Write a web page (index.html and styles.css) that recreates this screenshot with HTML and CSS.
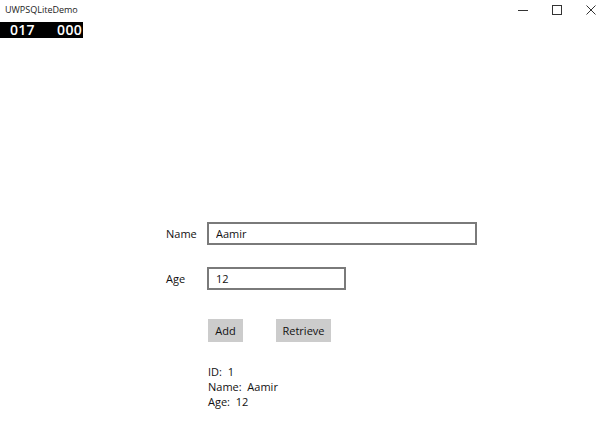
FILE: index.html
```html
<!DOCTYPE html>
<html lang="en">
<head>
    <meta charset="UTF-8">
    <meta name="viewport" content="width=device-width, initial-scale=1.0">
    <title>UWPSQLiteDemo</title>
    <link rel="stylesheet" href="styles.css">
</head>
<body>
    <div class="titlebar">
        <span class="app-title">UWPSQLiteDemo</span>
        <div class="window-controls">
            <span class="win-btn">
                <svg width="10" height="10" viewBox="0 0 10 10"><path d="M0 5.5h10" stroke="#333" stroke-width="1"/></svg>
            </span>
            <span class="win-btn">
                <svg width="10" height="10" viewBox="0 0 10 10"><rect x="0.5" y="0.5" width="9" height="9" fill="none" stroke="#333" stroke-width="1"/></svg>
            </span>
            <span class="win-btn">
                <svg width="10" height="10" viewBox="0 0 10 10"><path d="M0.5 0.5l9 9M9.5 0.5l-9 9" stroke="#333" stroke-width="1"/></svg>
            </span>
        </div>
    </div>
    <div class="frame-counter"><span>017</span><span>000</span></div>

    <div class="form">
        <label class="field-label" for="nameBox">Name</label>
        <input id="nameBox" class="text-box wide" type="text" value="Aamir">

        <label class="field-label" for="ageBox">Age</label>
        <input id="ageBox" class="text-box narrow" type="text" value="12">

        <div class="buttons">
            <button class="btn add-btn">Add</button>
            <button class="btn retrieve-btn">Retrieve</button>
        </div>

        <div class="result">
            <div>ID:&nbsp; 1</div>
            <div>Name:&nbsp; Aamir</div>
            <div>Age:&nbsp; 12</div>
        </div>
    </div>
</body>
</html>
```

FILE: styles.css
```css
body {
    font-family: 'Open Sans', 'Noto Sans', sans-serif;
    margin: 0;
    background-color: #fff;
    color: #111;
    overflow: hidden;
}

.titlebar {
    display: flex;
    justify-content: space-between;
    align-items: center;
    height: 19px;
}

.app-title {
    font-size: 9px;
    padding-left: 5px;
    color: #222;
}

.window-controls {
    display: flex;
    margin-right: -8px; /* close button runs past the crop */
}

.win-btn {
    width: 34px;
    height: 19px;
    display: flex;
    justify-content: center;
    align-items: center;
}

.frame-counter {
    display: flex;
    justify-content: space-between;
    width: 72px;
    height: 16px;
    margin-top: 3px;
    padding: 0 1px 0 10px;
    background-color: #000;
    color: #fff;
    font-size: 14px;
    font-weight: 600;
    line-height: 16px;
    letter-spacing: 0.3px;
}

.form {
    display: grid;
    grid-template-columns: 41px auto;
    justify-items: start;
    align-items: center;
    row-gap: 22px;
    padding: 184px 0 0 166px;
}

.field-label {
    font-size: 11px;
}

.text-box {
    box-sizing: border-box;
    height: 23px;
    border: 2px solid #7a7a7a;
    padding: 0 7px;
    font-family: inherit;
    font-size: 11px;
    color: #111;
    outline: none;
}

.text-box.wide {
    width: 270px;
}

.text-box.narrow {
    width: 139px;
}

.buttons {
    grid-column: 2;
    display: flex;
    gap: 33px;
    margin: 7px 0 0 1px;
}

.btn {
    height: 23px;
    border: none;
    background-color: #cccccc;
    font-family: inherit;
    font-size: 11px;
    color: #111;
    padding: 0;
}

.add-btn {
    width: 35px;
}

.retrieve-btn {
    width: 55px;
}

.result {
    grid-column: 2;
    margin: 0 0 0 1px;
    font-size: 11px;
    line-height: 15px;
}
```
